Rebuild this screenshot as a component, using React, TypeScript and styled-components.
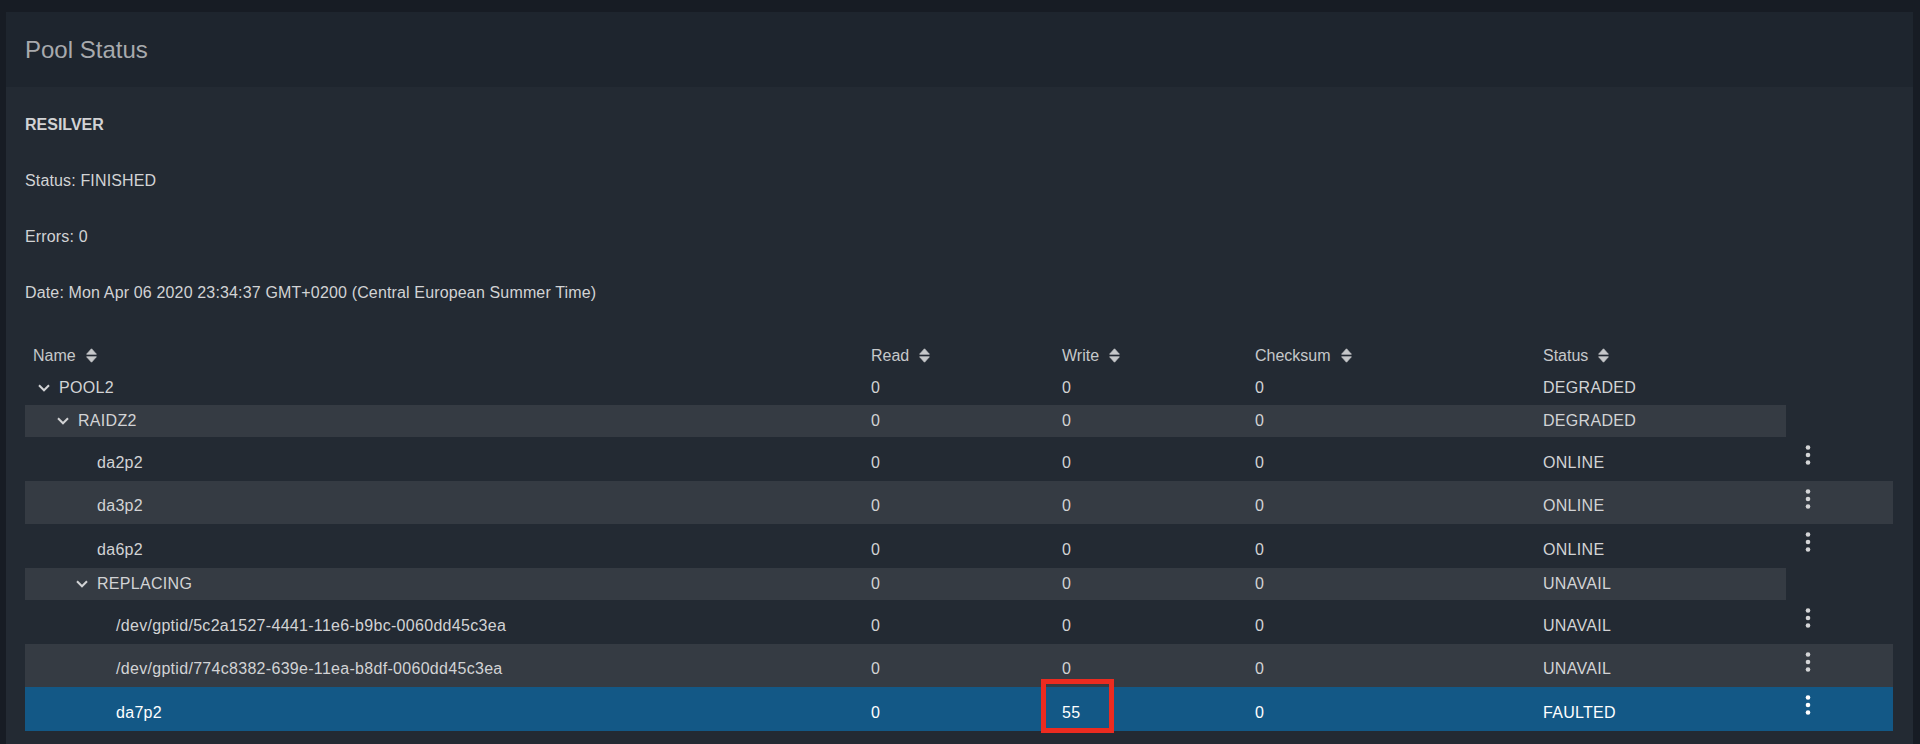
import * as React from "react";
import styled, { createGlobalStyle } from "styled-components";

const GlobalStyle = createGlobalStyle`
    html, body {
        margin: 0;
        padding: 0;
        background: #171c24;
    }
    body {
        font-family: "Liberation Sans", Arial, Helvetica, sans-serif;
        -webkit-font-smoothing: antialiased;
    }
`;

type VdevRow = {
    name: string,
    level: number,
    group: boolean,
    read: number,
    write: number,
    checksum: number,
    status: string,
    selected?: boolean,
    flagWrite?: boolean
}

const rows: VdevRow[] = [
    { name: "POOL2", level: 0, group: true, read: 0, write: 0, checksum: 0, status: "DEGRADED" },
    { name: "RAIDZ2", level: 1, group: true, read: 0, write: 0, checksum: 0, status: "DEGRADED" },
    { name: "da2p2", level: 2, group: false, read: 0, write: 0, checksum: 0, status: "ONLINE" },
    { name: "da3p2", level: 2, group: false, read: 0, write: 0, checksum: 0, status: "ONLINE" },
    { name: "da6p2", level: 2, group: false, read: 0, write: 0, checksum: 0, status: "ONLINE" },
    { name: "REPLACING", level: 2, group: true, read: 0, write: 0, checksum: 0, status: "UNAVAIL" },
    { name: "/dev/gptid/5c2a1527-4441-11e6-b9bc-0060dd45c3ea", level: 3, group: false, read: 0, write: 0, checksum: 0, status: "UNAVAIL" },
    { name: "/dev/gptid/774c8382-639e-11ea-b8df-0060dd45c3ea", level: 3, group: false, read: 0, write: 0, checksum: 0, status: "UNAVAIL" },
    { name: "da7p2", level: 3, group: false, read: 0, write: 55, checksum: 0, status: "FAULTED", selected: true, flagWrite: true },
];

const columns = ["Name", "Read", "Write", "Checksum", "Status"];

const DATA_COLS = "minmax(0,1fr) 191px 193px 288px 251px";
const ACTIONS_W = 107;

const Page = styled.div`
    min-height: 100vh;
    padding: 12px 7px 0 6px;
    box-sizing: border-box;
`;

const Card = styled.div`
    background: #232a33;
    min-height: calc(100vh - 12px);
`;

const CardHeader = styled.div`
    height: 75px;
    display: flex;
    align-items: center;
    padding-left: 19px;
    background: #1e252e;
`;

const Title = styled.div`
    font-size: 24px;
    color: #a8aaad;
`;

const CardBody = styled.div`
    padding: 28px 20px 20px 19px;
`;

const Summary = styled.div`
    display: flex;
    flex-direction: column;
    gap: 36px;
`;

const Line = styled.div<{ $bold?: boolean }>`
    font-size: 16px;
    line-height: 20px;
    color: #d2d3d5;
    letter-spacing: ${p => p.$bold ? 0 : 0.15}px;
    font-weight: ${p => p.$bold ? 700 : 400};
`;

const Table = styled.div`
    margin-top: 36px;
    display: flex;
    flex-direction: column;
`;

const HeaderRow = styled.div`
    display: grid;
    grid-template-columns: ${DATA_COLS};
    width: calc(100% - ${ACTIONS_W}px);
    height: 33px;
`;

const HeadCell = styled.div`
    display: flex;
    align-items: center;
    padding-left: 8px;
    font-size: 16px;
    color: #c6c8ca;
    gap: 10px;
`;

const Row = styled.div<{ $leaf: boolean, $striped: boolean, $selected: boolean }>`
    display: grid;
    grid-template-columns: ${p => p.$leaf ? `${DATA_COLS} ${ACTIONS_W}px` : DATA_COLS};
    width: ${p => p.$leaf ? "100%" : `calc(100% - ${ACTIONS_W}px)`};
    height: ${p => p.$leaf ? 43.5 : 32.5}px;
    background: ${p => p.$selected ? "#135886" : p.$striped ? "#353b43" : "transparent"};
    color: ${p => p.$selected ? "#ffffff" : "#d2d3d5"};
`;

const Cell = styled.div<{ $leaf: boolean }>`
    position: relative;
    display: flex;
    align-items: center;
    padding-left: 8px;
    padding-top: ${p => p.$leaf ? 8 : 0}px;
    font-size: 16px;
    letter-spacing: 0.3px;
    white-space: nowrap;
`;

const Toggle = styled.span`
    display: inline-flex;
    align-items: center;
    width: 26px;
    padding-left: 5px;
    box-sizing: border-box;
    flex: none;
`;

const Indent = styled.span<{ $level: number }>`
    display: inline-block;
    width: ${p => p.$level * 19}px;
    flex: none;
`;

const ActionCell = styled.div`
    display: flex;
    align-items: flex-start;
    padding: 8px 0 0 19px;
`;

const MenuButton = styled.button<{ $light: boolean }>`
    border: none;
    background: none;
    padding: 0;
    width: 6px;
    height: 20px;
    cursor: pointer;
    color: ${p => p.$light ? "#ffffff" : "#d4d5d7"};
    display: block;
`;

const Flag = styled.div`
    position: absolute;
    left: -13px;
    top: -8px;
    width: 73px;
    height: 54px;
    border: 5px solid #ec2b20;
    box-sizing: border-box;
    pointer-events: none;
`;

const SortIcon = () => (
    <svg width="11" height="15" viewBox="0 0 11 15">
        <path d="M0.6 6.2 L5.5 0.8 L10.4 6.2 Z" fill="currentColor" stroke="currentColor" strokeWidth="0.8" strokeLinejoin="round" />
        <path d="M0.6 8.8 L10.4 8.8 L5.5 14.2 Z" fill="currentColor" stroke="currentColor" strokeWidth="0.8" strokeLinejoin="round" />
    </svg>
);

const Chevron = () => (
    <svg width="12" height="8" viewBox="0 0 12 8">
        <path d="M1 1.3 L6 6.3 L11 1.3" fill="none" stroke="currentColor" strokeWidth="2" />
    </svg>
);

const MoreVert = () => (
    <svg width="6" height="20" viewBox="0 0 6 20">
        <circle cx="3" cy="2.5" r="2.3" fill="currentColor" />
        <circle cx="3" cy="10" r="2.3" fill="currentColor" />
        <circle cx="3" cy="17.5" r="2.3" fill="currentColor" />
    </svg>
);

const App = () => {
    return (
        <>
            <GlobalStyle />
            <Page>
                <Card>
                    <CardHeader>
                        <Title>Pool Status</Title>
                    </CardHeader>
                    <CardBody>
                        <Summary>
                            <Line $bold>RESILVER</Line>
                            <Line>Status: FINISHED</Line>
                            <Line>Errors: 0</Line>
                            <Line>Date: Mon Apr 06 2020 23:34:37 GMT+0200 (Central European Summer Time)</Line>
                        </Summary>
                        <Table>
                            <HeaderRow>
                                {columns.map(c => (
                                    <HeadCell key={c}>{c}<SortIcon /></HeadCell>
                                ))}
                            </HeaderRow>
                            {rows.map((r, i) => {
                                const leaf = !r.group;
                                return (
                                    <Row key={r.name} $leaf={leaf} $striped={i % 2 === 1} $selected={!!r.selected}>
                                        <Cell $leaf={leaf}>
                                            <Indent $level={r.level} />
                                            <Toggle>{r.group && <Chevron />}</Toggle>
                                            {r.name}
                                        </Cell>
                                        <Cell $leaf={leaf}>{r.read}</Cell>
                                        <Cell $leaf={leaf}>
                                            {r.write}
                                            {r.flagWrite && <Flag />}
                                        </Cell>
                                        <Cell $leaf={leaf}>{r.checksum}</Cell>
                                        <Cell $leaf={leaf}>{r.status}</Cell>
                                        {leaf && (
                                            <ActionCell>
                                                <MenuButton $light={!!r.selected}><MoreVert /></MenuButton>
                                            </ActionCell>
                                        )}
                                    </Row>
                                );
                            })}
                        </Table>
                    </CardBody>
                </Card>
            </Page>
        </>
    );
};

export default App;
